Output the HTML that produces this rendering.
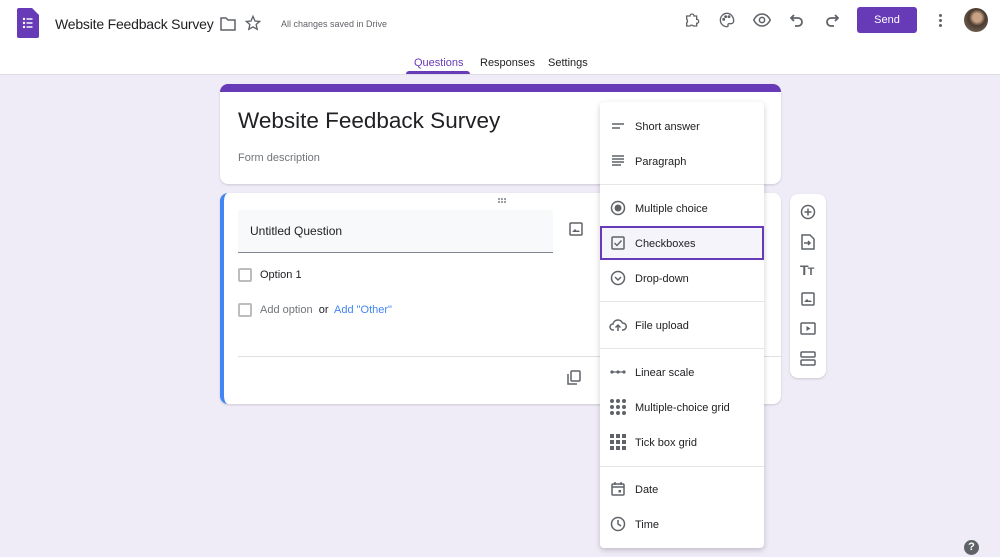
<!DOCTYPE html>
<html><head><style>
*{box-sizing:border-box;margin:0;padding:0}
body{width:1000px;height:557px;overflow:hidden;background:#efebf7;font-family:"Liberation Sans",sans-serif;position:relative;color:#202124}
.hdr{position:absolute;left:0;top:0;width:1000px;height:75px;background:#fff;border-bottom:1px solid #e0dde8}
.abs{position:absolute}
.ic{position:absolute;fill:none;stroke:#5f6368;stroke-width:1.8}
.card{position:absolute;background:#fff;border-radius:8px;box-shadow:0 1px 2px rgba(0,0,0,.15)}
.mi{position:absolute;left:0;width:164px;height:34px;font-size:11px;color:#202124}
.mi span{position:absolute;left:35px;top:12px}
.mi svg{position:absolute;left:9px;top:8px}
.sep{position:absolute;left:0;width:164px;height:1px;background:#e6e6e6}
</style></head><body>
<div class="hdr">
 <svg class="abs" style="left:17px;top:8px" width="22" height="30" viewBox="0 0 22 30"><path d="M2 0h13l7 7v21a2 2 0 0 1-2 2H2a2 2 0 0 1-2-2V2a2 2 0 0 1 2-2z" fill="#673ab7"/><g fill="#fff"><circle cx="7" cy="11" r="1.2"/><circle cx="7" cy="15" r="1.2"/><circle cx="7" cy="19" r="1.2"/><rect x="9.5" y="10.3" width="6" height="1.4"/><rect x="9.5" y="14.3" width="6" height="1.4"/><rect x="9.5" y="18.3" width="6" height="1.4"/></g></svg>
 <div class="abs" style="left:55px;top:16px;font-size:14px;letter-spacing:-0.2px">Website Feedback Survey</div>
 <svg class="ic" style="left:220px;top:17px" width="16" height="14" viewBox="0 0 16 14"><path d="M1 1h5l2 2h7v10H1z" stroke-width="1.5"/></svg>
 <svg class="ic" style="left:245px;top:15px" width="16" height="16" viewBox="0 0 24 24"><path d="M12 2l3 7 7 .6-5.3 4.6 1.6 7.3L12 17.8 5.7 21.5l1.6-7.3L2 9.6 9 9z" stroke-width="2"/></svg>
 <div class="abs" style="left:281px;top:19px;font-size:9px;color:#5f6368">All changes saved in Drive</div>
 <svg class="ic" style="left:684px;top:12px" width="16" height="16" viewBox="0 0 24 24"><path d="M4 6h5a3 3 0 0 1 6 0h4v5a3 3 0 0 1 0 6v4h-5a3 3 0 0 0-5 0H4v-5a3 3 0 0 0 0-5z" stroke-width="2"/></svg>
 <svg class="ic" style="left:719px;top:12px" width="16" height="16" viewBox="0 0 24 24"><path d="M12 2a10 10 0 0 0 0 20c1.5 0 2-1 1.5-2s0-2.5 1.5-2.5H18a4 4 0 0 0 4-4C22 7 17.5 2 12 2z" stroke-width="2"/><circle cx="7" cy="11" r="1.3" fill="#5f6368"/><circle cx="10" cy="7" r="1.3" fill="#5f6368"/><circle cx="15" cy="7" r="1.3" fill="#5f6368"/></svg>
 <svg class="ic" style="left:753px;top:12px" width="18" height="16" viewBox="0 0 24 20"><path d="M1 10C4 4 8 2 12 2s8 2 11 8c-3 6-7 8-11 8S4 16 1 10z" stroke-width="2"/><circle cx="12" cy="10" r="3.5" stroke-width="2"/></svg>
 <svg class="ic" style="left:790px;top:13px" width="14" height="14" viewBox="0 0 14 14"><path d="M4 2L1 5l3 3M1 5h7a4 4 0 0 1 0 8H5"/></svg>
 <svg class="ic" style="left:825px;top:13px" width="14" height="14" viewBox="0 0 14 14"><path d="M10 2l3 3-3 3M13 5H6a4 4 0 0 0 0 8h3"/></svg>
 <div class="abs" style="left:857px;top:7px;width:60px;height:26px;background:#673ab7;border-radius:3px;color:#fff;font-size:11px;text-align:center;line-height:26px">Send</div>
 <div class="abs" style="left:939px;top:14px;width:3px;height:3px;border-radius:50%;background:#5f6368;box-shadow:0 5px 0 #5f6368,0 10px 0 #5f6368"></div>
 <div class="abs" style="left:964px;top:8px;width:24px;height:24px;border-radius:50%;background:radial-gradient(circle at 55% 40%,#c9a184 0 22%,#4a3a30 42%,#8a7a6a 100%)"></div>
 <div class="abs" style="left:414px;top:57px;font-size:11px;color:#673ab7">Questions</div>
 <div class="abs" style="left:406px;top:71px;width:64px;height:3px;background:#673ab7;border-radius:3px 3px 0 0"></div>
 <div class="abs" style="left:480px;top:57px;font-size:11px">Responses</div>
 <div class="abs" style="left:548px;top:57px;font-size:11px">Settings</div>
</div>

<div class="card" style="left:220px;top:84px;width:561px;height:100px;border-top:8px solid #673ab7">
 <div class="abs" style="left:18px;top:16px;font-size:22.5px">Website Feedback Survey</div>
 <div class="abs" style="left:18px;top:60px;font-size:11px;color:#70757a">Form description</div>
</div>

<div class="card" style="left:220px;top:193px;width:561px;height:211px;border-left:4px solid #4285f4;overflow:hidden">
 <div class="abs" style="left:274px;top:5px;width:2px;height:2px;background:#9aa0a6;box-shadow:3px 0 #9aa0a6,6px 0 #9aa0a6,0 3px #9aa0a6,3px 3px #9aa0a6,6px 3px #9aa0a6"></div>
 <div class="abs" style="left:14px;top:17px;width:315px;height:43px;background:#f8f9fa;border-bottom:1px solid #80868b"></div>
 <div class="abs" style="left:26px;top:31px;font-size:12px">Untitled Question</div>
 <svg class="ic" style="left:345px;top:29px" width="14" height="14" viewBox="0 0 14 14"><rect x="1" y="1" width="12" height="12" rx="1" stroke-width="1.5"/><path d="M3 10l3-3 2 2 1-1 2 2z" fill="#5f6368" stroke="none"/></svg>
 <div class="abs" style="left:14px;top:75px;width:14px;height:14px;border:2px solid #bdbdbd;border-radius:2px"></div>
 <div class="abs" style="left:36px;top:76px;font-size:11px">Option 1</div>
 <div class="abs" style="left:14px;top:110px;width:14px;height:14px;border:2px solid #bdbdbd;border-radius:2px"></div>
 <div class="abs" style="left:36px;top:111px;font-size:11px;color:#70757a">Add option <span style="color:#202124">&nbsp;or&nbsp;</span> <span style="color:#4285f4">Add "Other"</span></div>
 <div class="abs" style="left:14px;top:163px;width:560px;height:1px;background:#e0e0e0"></div>
 <svg class="ic" style="left:343px;top:177px" width="14" height="15" viewBox="0 0 14 15"><rect x="4" y="1" width="9" height="10" rx="1" stroke-width="1.5"/><path d="M1 4v10h9" stroke-width="1.5"/></svg>
</div>

<div class="card" style="left:790px;top:194px;width:36px;height:184px">
 <svg class="ic" style="left:10px;top:10px" width="16" height="16" viewBox="0 0 16 16"><circle cx="8" cy="8" r="6.5" stroke-width="1.5"/><path d="M8 4.5v7M4.5 8h7" stroke-width="1.5"/></svg>
 <svg class="ic" style="left:11px;top:40px" width="14" height="16" viewBox="0 0 14 16"><path d="M1 1h8l4 4v10H1z" stroke-width="1.5"/><path d="M3 9h6M7 7l2 2-2 2" stroke-width="1.5"/></svg>
 <div class="abs" style="left:10px;top:68px;font-size:14px;font-weight:bold;color:#5f6368;letter-spacing:-1px">T<span style="font-size:11px">T</span></div>
 <svg class="ic" style="left:11px;top:98px" width="14" height="14" viewBox="0 0 14 14"><rect x="1" y="1" width="12" height="12" rx="1" stroke-width="1.5"/><path d="M3 10l3-3 2 2 1-1 2 2z" fill="#5f6368" stroke="none"/></svg>
 <svg class="ic" style="left:10px;top:128px" width="16" height="13" viewBox="0 0 16 13"><rect x="1" y="1" width="14" height="11" rx="1" stroke-width="1.5"/><path d="M6.5 4v5l4-2.5z" fill="#5f6368" stroke="none"/></svg>
 <svg class="ic" style="left:10px;top:157px" width="16" height="15" viewBox="0 0 16 15"><rect x="1" y="1" width="14" height="5" rx="1" stroke-width="1.5"/><rect x="1" y="9" width="14" height="5" rx="1" stroke-width="1.5"/></svg>
</div>

<div class="card" style="left:600px;top:102px;width:164px;height:446px;border-radius:4px;box-shadow:0 2px 6px rgba(0,0,0,.2)">
 <div class="mi" style="top:7px"><svg width="18" height="18" viewBox="0 0 18 18"><path d="M3 7h12M3 11h8" stroke="#5f6368" stroke-width="1.5"/></svg><span>Short answer</span></div>
 <div class="mi" style="top:42px"><svg width="18" height="18" viewBox="0 0 18 18"><path d="M3 4h12M3 7h12M3 10h12M3 13h9" stroke="#5f6368" stroke-width="1.4"/></svg><span>Paragraph</span></div>
 <div class="sep" style="top:82px"></div>
 <div class="mi" style="top:89px"><svg width="18" height="18" viewBox="0 0 18 18"><circle cx="9" cy="9" r="6.5" fill="none" stroke="#5f6368" stroke-width="1.5"/><circle cx="9" cy="9" r="3.5" fill="#5f6368"/></svg><span>Multiple choice</span></div>
 <div class="mi" style="top:124px;height:34px;border:2px solid #673ab7;background:#f6f4fb;left:0"><svg style="left:7px;top:6px" width="18" height="18" viewBox="0 0 18 18"><rect x="3" y="3" width="12" height="12" rx="1" fill="none" stroke="#5f6368" stroke-width="1.5"/><path d="M5.5 9l2.5 2.5 4.5-5" fill="none" stroke="#5f6368" stroke-width="1.4"/></svg><span style="left:33px;top:10px">Checkboxes</span></div>
 <div class="mi" style="top:159px"><svg width="18" height="18" viewBox="0 0 18 18"><circle cx="9" cy="9" r="6.5" fill="none" stroke="#5f6368" stroke-width="1.5"/><path d="M6 8l3 3 3-3" fill="none" stroke="#5f6368" stroke-width="1.5"/></svg><span>Drop-down</span></div>
 <div class="sep" style="top:199px"></div>
 <div class="mi" style="top:206px"><svg width="18" height="18" viewBox="0 0 18 18"><path d="M5 14H4a3 3 0 0 1 0-6 5 5 0 0 1 9.5-1A3.5 3.5 0 0 1 14 14h-1M9 15V9M6.5 11.5L9 9l2.5 2.5" fill="none" stroke="#5f6368" stroke-width="1.5"/></svg><span>File upload</span></div>
 <div class="sep" style="top:246px"></div>
 <div class="mi" style="top:253px"><svg width="18" height="18" viewBox="0 0 18 18"><path d="M2 9h14" stroke="#5f6368" stroke-width="1.2"/><circle cx="3" cy="9" r="1.6" fill="#5f6368"/><circle cx="9" cy="9" r="1.6" fill="#5f6368"/><circle cx="15" cy="9" r="1.6" fill="#5f6368"/></svg><span>Linear scale</span></div>
 <div class="mi" style="top:288px"><svg width="18" height="18" viewBox="0 0 18 18" fill="#5f6368"><circle cx="3" cy="3" r="2"/><circle cx="9" cy="3" r="2"/><circle cx="15" cy="3" r="2"/><circle cx="3" cy="9" r="2"/><circle cx="9" cy="9" r="2"/><circle cx="15" cy="9" r="2"/><circle cx="3" cy="15" r="2"/><circle cx="9" cy="15" r="2"/><circle cx="15" cy="15" r="2"/></svg><span>Multiple-choice grid</span></div>
 <div class="mi" style="top:323px"><svg width="18" height="18" viewBox="0 0 18 18" fill="#5f6368"><rect x="1" y="1" width="4" height="4"/><rect x="7" y="1" width="4" height="4"/><rect x="13" y="1" width="4" height="4"/><rect x="1" y="7" width="4" height="4"/><rect x="7" y="7" width="4" height="4"/><rect x="13" y="7" width="4" height="4"/><rect x="1" y="13" width="4" height="4"/><rect x="7" y="13" width="4" height="4"/><rect x="13" y="13" width="4" height="4"/></svg><span>Tick box grid</span></div>
 <div class="sep" style="top:364px"></div>
 <div class="mi" style="top:370px"><svg width="18" height="18" viewBox="0 0 18 18"><rect x="3" y="4" width="12" height="11" rx="1" fill="none" stroke="#5f6368" stroke-width="1.5"/><path d="M3 7h12M6 2v3M12 2v3" stroke="#5f6368" stroke-width="1.5"/><rect x="9.5" y="10" width="2.5" height="2.5" fill="#5f6368"/></svg><span>Date</span></div>
 <div class="mi" style="top:405px"><svg width="18" height="18" viewBox="0 0 18 18"><circle cx="9" cy="9" r="6.5" fill="none" stroke="#5f6368" stroke-width="1.5"/><path d="M9 5v4l3 2" fill="none" stroke="#5f6368" stroke-width="1.5"/></svg><span>Time</span></div>
</div>

<div class="abs" style="left:964px;top:540px;width:15px;height:15px;border-radius:50%;background:#5f6368;color:#fff;font-size:11px;font-weight:bold;text-align:center;line-height:15px">?</div>
</body></html>
